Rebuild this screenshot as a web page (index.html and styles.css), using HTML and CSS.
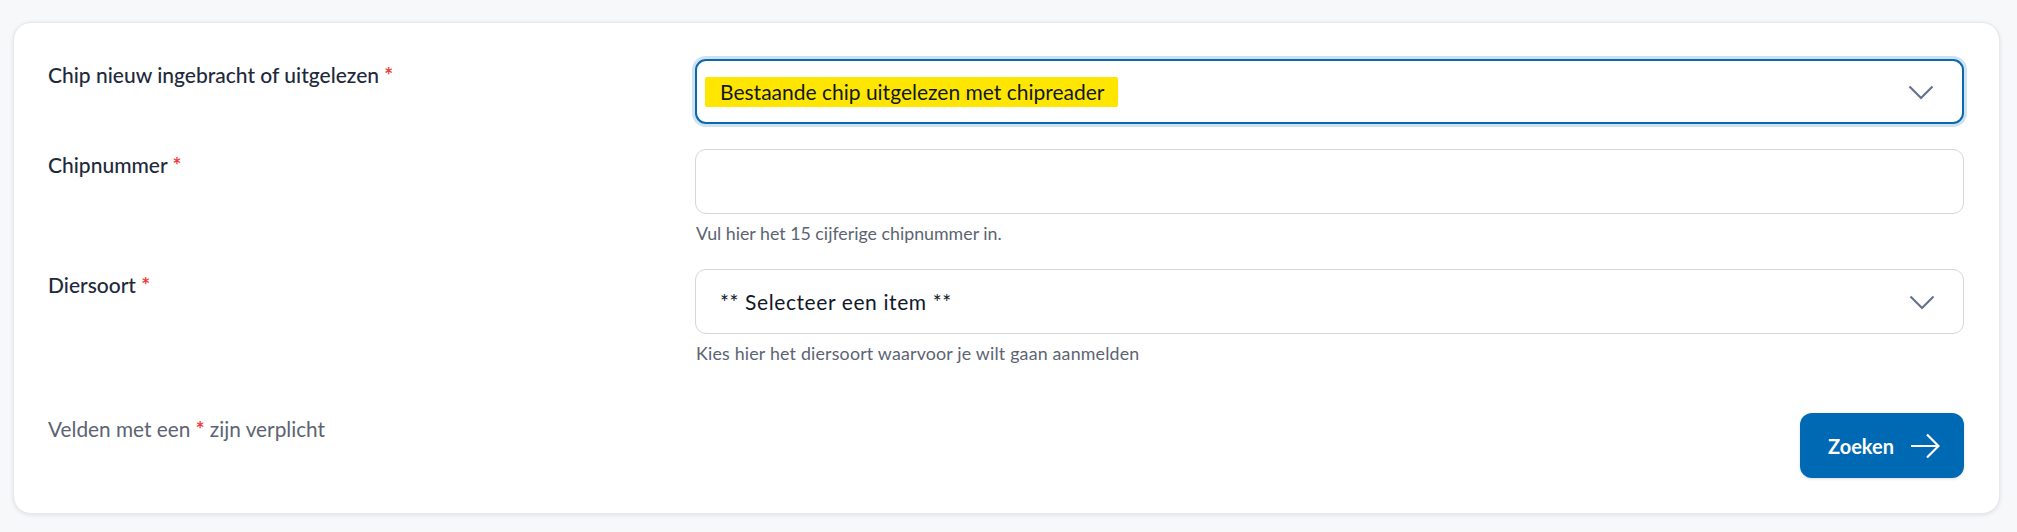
FILE: index.html
```html
<!DOCTYPE html>
<html lang="nl">
<head>
<meta charset="utf-8">
<title>Chip zoeken</title>
<link rel="stylesheet" href="styles.css">
</head>
<body>
<form class="card">
  <div class="row">
    <div class="label">Chip nieuw ingebracht of uitgelezen <span class="req">*</span></div>
    <div class="field">
      <div class="control select focus">
        <span class="value marked">Bestaande chip uitgelezen met chipreader</span>
        <svg class="chev" width="26" height="15" viewBox="0 0 26 15"><path d="M1.5 1.5 L13 13 L24.5 1.5" fill="none" stroke="#64748b" stroke-width="2.2"/></svg>
      </div>
    </div>
  </div>
  <div class="row">
    <div class="label">Chipnummer <span class="req">*</span></div>
    <div class="field">
      <div class="control"></div>
      <div class="help">Vul hier het 15 cijferige chipnummer in.</div>
    </div>
  </div>
  <div class="row">
    <div class="label">Diersoort <span class="req">*</span></div>
    <div class="field">
      <div class="control select">
        <span class="value wide">** Selecteer een item **</span>
        <svg class="chev" width="26" height="15" viewBox="0 0 26 15"><path d="M1.5 1.5 L13 13 L24.5 1.5" fill="none" stroke="#64748b" stroke-width="2.2"/></svg>
      </div>
      <div class="help wide">Kies hier het diersoort waarvoor je wilt gaan aanmelden</div>
    </div>
  </div>
  <div class="footer">
    <div class="note">Velden met een <span class="req">*</span> zijn verplicht</div>
    <button type="button" class="btn">Zoeken
      <svg width="30" height="26" viewBox="0 0 30 26"><path d="M1 13 H28 M17 1.5 L28.5 13 L17 24.5" fill="none" stroke="#fff" stroke-width="2.2"/></svg>
    </button>
  </div>
</form>
</body>
</html>
```

FILE: styles.css
```css
* { box-sizing: border-box; }
html, body { margin: 0; padding: 0; }
body {
  background: #f7f8fa;
  font-family: Lato, "Noto Sans", sans-serif;
  color: #1e293b;
  width: 2017px;
  height: 532px;
  overflow: hidden;
}
.card {
  margin: 22px 17px 0 13px;
  background: #ffffff;
  border: 1px solid #e6e8ec;
  border-radius: 18px;
  box-shadow: 0 1px 4px rgba(15, 23, 42, 0.10);
  padding: 36px 35px 35px 34px;
  display: flex;
  flex-direction: column;
}
.row {
  display: grid;
  grid-template-columns: 647px 1fr;
  margin-bottom: 25px;
}
.row:nth-child(2) { margin-bottom: 24px; }
.row:nth-child(3) { margin-bottom: 48px; }
.label {
  font-size: 21px;
  font-weight: 500;
  line-height: 30px;
  color: #1e293b;
  padding-top: 1px;
}
.req { color: #ef3b3b; font-weight: 700; }
.control {
  height: 65px;
  border: 1px solid #d4d7de;
  border-radius: 11px;
  background: #fff;
  display: flex;
  align-items: center;
  padding: 0 28px 0 24px;
}
.select { justify-content: space-between; }
.focus {
  border: 2px solid #0b69b0;
  box-shadow: 0 0 0 3px #cfe2f1;
  padding-left: 8px;
}
.value {
  font-size: 21px;
  line-height: 28px;
  color: #111827;
}
.value.wide { letter-spacing: 0.6px; }
.marked {
  background: #ffe600;
  padding: 1px 13px 1px 15px;
  border-radius: 2px;
}
.chev { display: block; margin-top: 1px; }
.help {
  margin-top: 7px;
  font-size: 17.8px;
  line-height: 24px;
  color: #5b6472;
  padding-left: 1px;
}
.help.wide { letter-spacing: 0.2px; }
.footer {
  display: flex;
  justify-content: space-between;
  align-items: flex-start;
}
.note {
  margin-top: 4px;
  font-size: 20.8px;
  line-height: 24px;
  color: #5b6472;
}
.btn {
  width: 164px;
  height: 65px;
  border: none;
  border-radius: 12px;
  background: #0069b4;
  color: #fff;
  font-family: Lato, "Noto Sans", sans-serif;
  font-size: 20px;
  font-weight: 700;
  display: flex;
  align-items: center;
  justify-content: center;
  gap: 16px;
  padding: 0 0 0 4px;
  box-shadow: 0 1px 3px rgba(15, 23, 42, 0.15);
}
.btn svg { display: block; }
```
